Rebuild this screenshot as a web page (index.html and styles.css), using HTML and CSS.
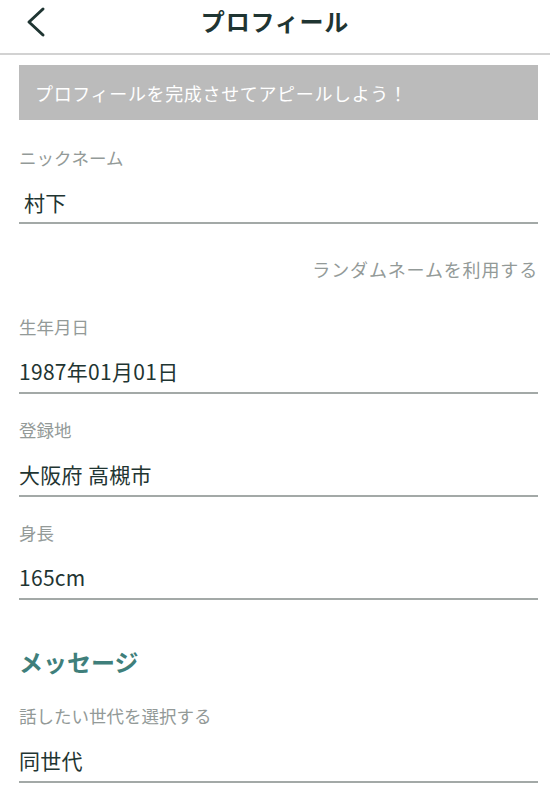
FILE: index.html
```html
<!DOCTYPE html>
<html lang="ja">
<head>
    <meta charset="UTF-8">
    <meta name="viewport" content="width=device-width, initial-scale=1.0">
    <title>プロフィール</title>
    <link rel="stylesheet" href="styles.css">
</head>
<body>
    <header class="app-header">
        <button class="back-btn" aria-label="戻る">
            <svg width="24" height="32" viewBox="0 0 24 32">
                <polyline points="19,3 5,16 19,29" fill="none" stroke="#1f3532" stroke-width="3" stroke-linecap="round" stroke-linejoin="round"/>
            </svg>
        </button>
        <h1 class="app-title">プロフィール</h1>
    </header>

    <main class="profile">
        <div class="notice">プロフィールを完成させてアピールしよう！</div>

        <div class="field field-first">
            <div class="field-label">ニックネーム</div>
            <div class="field-value indent">村下</div>
        </div>
        <div class="random-link">ランダムネームを利用する</div>

        <div class="field">
            <div class="field-label">生年月日</div>
            <div class="field-value">1987年01月01日</div>
        </div>
        <div class="field">
            <div class="field-label">登録地</div>
            <div class="field-value">大阪府 高槻市</div>
        </div>
        <div class="field">
            <div class="field-label">身長</div>
            <div class="field-value">165cm</div>
        </div>

        <h2 class="section-title">メッセージ</h2>
        <div class="field">
            <div class="field-label">話したい世代を選択する</div>
            <div class="field-value">同世代</div>
        </div>
    </main>
</body>
</html>
```

FILE: styles.css
```css
:root {
    --dark: #1f3532;
    --gray: #939a98;
    --line: #a3a9a7;
    --teal: #3f7f7b;
    --banner: #bbbbbb;
}
* {
    box-sizing: border-box;
}
body {
    margin: 0;
    background: #fff;
    color: var(--dark);
    font-family: "Noto Sans CJK JP", "Noto Sans", sans-serif;
    overflow: hidden;
}
.app-header {
    position: relative;
    height: 55px;
    padding-bottom: 11px;
    display: flex;
    align-items: center;
    justify-content: center;
    border-bottom: 2px solid #d2d2d2;
}
.back-btn {
    position: absolute;
    left: 24px;
    top: 6px;
    background: none;
    border: none;
    padding: 0;
    cursor: pointer;
}
.app-title {
    margin: 0;
    font-size: 24px;
    font-weight: 700;
    line-height: 32px;
    letter-spacing: 0.8px;
}
.profile {
    padding: 10px 12px 0 19px;
}
.notice {
    background: var(--banner);
    color: #fff;
    height: 55px;
    display: flex;
    align-items: center;
    padding-left: 16px;
    font-size: 18px;
    letter-spacing: 0.65px;
}
.field {
    padding: 24px 0 6px;
    border-bottom: 2px solid var(--line);
}
.field-first {
    padding-top: 26px;
    padding-bottom: 5px;
}
.field-label {
    color: var(--gray);
    font-size: 17.5px;
    line-height: 24px;
}
.field-value {
    margin-top: 17px;
    font-size: 21px;
    line-height: 30px;
    letter-spacing: 0.3px;
}
.indent {
    padding-left: 5px;
}
.random-link {
    margin: 33px 0 10px;
    text-align: right;
    color: var(--gray);
    font-size: 18px;
    line-height: 24px;
    letter-spacing: 0.85px;
}
.section-title {
    margin: 46px 0 2px;
    color: var(--teal);
    font-size: 24px;
    font-weight: 700;
    line-height: 32px;
}
```
